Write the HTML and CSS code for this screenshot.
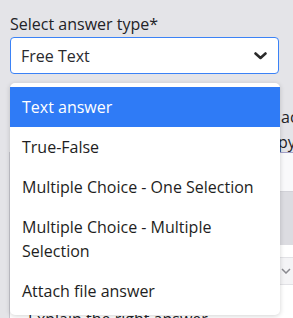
FILE: index.html
```html
<!DOCTYPE html>
<html>
<head>
<meta charset="utf-8">
<link rel="stylesheet" href="styles.css">
</head>
<body>
<div class="page">
  <div class="field">
    <label class="label">Select answer type*</label>
    <div class="select">
      <span class="select-value">Free Text</span>
      <svg class="chevron" width="13" height="8" viewBox="0 0 13 8"><path d="M1.5 1.5 L6.5 6 L11.5 1.5" fill="none" stroke="#2b2b2b" stroke-width="2.6" stroke-linecap="round" stroke-linejoin="round"/></svg>
    </div>
    <ul class="menu">
      <li class="option selected">Text answer</li>
      <li class="option">True-False</li>
      <li class="option">Multiple Choice - One Selection</li>
      <li class="option">Multiple Choice - Multiple Selection</li>
      <li class="option">Attach file answer</li>
    </ul>
  </div>
  <div class="hint">
    <div class="hint-line">ac</div>
    <div class="hint-line shifted">py</div>
  </div>
  <div class="panel">
    <div class="tabs"></div>
    <div class="band"></div>
    <div class="body">
      <div class="input-box">
        <svg class="small-chevron" width="10" height="6" viewBox="0 0 10 6"><path d="M1 1 L5 5 L9 1" fill="none" stroke="#8a8a90" stroke-width="1.5"/></svg>
      </div>
      <p class="explain">Explain the right answer</p>
    </div>
  </div>
</div>
</body>
</html>
```

FILE: styles.css
```css
* { box-sizing: border-box; }
html, body { margin: 0; padding: 0; }
body {
  background: #e4e4e8;
  font-family: "Open Sans", "Noto Sans", sans-serif;
  font-size: 16px;
  line-height: 24px;
  color: #222226;
  width: 293px;
  height: 318px;
  overflow: hidden;
}
.page { position: relative; }
.field {
  position: relative;
  padding: 12px 14px 0 10px;
}
.label { display: block; height: 25px; }
.select {
  height: 37px;
  border: 1px solid #3b82f6;
  border-radius: 4px;
  background: #fff;
  display: flex;
  align-items: center;
  justify-content: space-between;
  padding: 0 11px 0 10px;
}
.select-value { color: #2a2a2e; }
.chevron { display: block; margin-top: 1px; }
.menu {
  position: absolute;
  top: 83px;
  left: 10px;
  width: 270px;
  margin: 0;
  padding: 4px 0;
  list-style: none;
  background: #fff;
  border-radius: 5px;
  box-shadow: 0 1px 5px rgba(0, 0, 0, 0.18);
  z-index: 5;
}
.option {
  padding: 8px 12px;
  color: #1e1e22;
}
.option.selected {
  background: #2f7bf6;
  color: #fff;
}
.hint {
  margin-top: 31px;
  height: 47px;
  overflow: hidden;
  line-height: 25px;
}
.hint-line { padding-left: 281px; }
.hint-line.shifted { padding-left: 278px; }
.panel {
  margin-left: 9px;
  border-left: 1px solid #c6c6ce;
}
.tabs {
  height: 40px;
  border-top: 1px solid #a4a1c8;
  border-bottom: 1px solid #d2d2d8;
  background: #f9f9fb;
}
.band {
  height: 53px;
  background: #dcdce1;
}
.body {
  background: #fff;
  padding: 12px 0 10px 18px;
}
.input-box {
  height: 28px;
  background: #f4f4f6;
  border: 1px solid #e2e2e6;
  border-radius: 4px;
  display: flex;
  align-items: center;
  justify-content: flex-end;
  margin-left: -18px;
  margin-right: -20px;
  padding-right: 21px;
}
.small-chevron { display: block; }
.explain {
  margin: 22px 0 0 0;
  white-space: nowrap;
}
```
